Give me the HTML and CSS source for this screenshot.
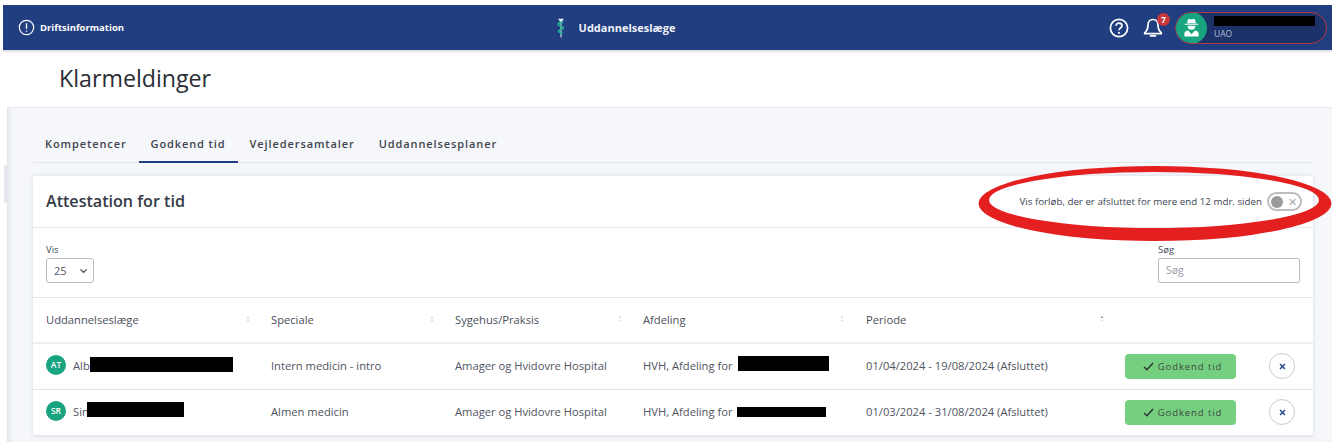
FILE: index.html
```html
<!DOCTYPE html>
<html lang="da">
<head>
<meta charset="utf-8">
<title>Klarmeldinger</title>
<link rel="stylesheet" href="styles.css">
</head>
<body>
<div class="app">
  <header class="topbar">
    <div class="top-left">
      <svg class="ico-info" viewBox="0 0 18 18"><circle cx="9" cy="9" r="7.6" fill="none" stroke="#fff" stroke-width="1.3"/><path d="M9 4.6v5.6M9 12.2v1.4" stroke="#fff" stroke-width="1.5"/></svg>
      <span>Driftsinformation</span>
    </div>
    <div class="top-center">
      <svg class="logo" viewBox="0 0 12 24"><path d="M2.500 .8h7L6.600 5v18.500H5.400V5z" fill="#e8edf6"/><path d="M8.800 5.200C5.500 4.800 2.600 5.600 2.600 7.800s6.200 1.600 6.200 4-5.800 1.600-5.800 3.800 4 1.600 4.600 3" fill="none" stroke="#1fb590" stroke-width="2"/></svg>
      <span>Uddannelseslæge</span>
    </div>
    <div class="top-right">
      <svg class="ico-help" viewBox="0 0 20 20"><circle cx="10" cy="10" r="8.600" fill="none" stroke="#fff" stroke-width="1.700"/><path d="M7 7.800C7 6 8.400 5.200 10 5.200s3 1 3 2.500c0 2.300-3 2.200-3 4.500" fill="none" stroke="#fff" stroke-width="1.700"/><circle cx="10" cy="14.800" r="1.100" fill="#fff"/></svg>
      <div class="bell">
        <svg viewBox="0 0 20 22"><path d="M10 2.500c-3.300 0-5 2.600-5 5.500 0 4-1.200 6-3.300 7.800v.9h16.600v-.9C16.200 14 15 12 15 8c0-2.900-1.700-5.500-5-5.500z" fill="none" stroke="#fff" stroke-width="1.700"/><path d="M7.500 18.800h5" stroke="#fff" stroke-width="1.800" stroke-linecap="round"/></svg>
        <span class="badge">7</span>
      </div>
      <div class="user">
        <span class="user-avatar">
          <svg viewBox="0 0 20 20"><path d="M6 2.500 7 .8l3 .7 3-.7 1 1.700 .8 3H5.200z" fill="#fff"/><path d="M2.800 6h14.400v1.100H2.800z" fill="#fff"/><path d="M5.800 8.200h8.400c0 2.800-1.800 4.200-4.200 4.200S5.800 11 5.800 8.200z" fill="#fff"/><path d="M2.500 19.500v-2.800c0-2 1.800-3.500 4-3.500l3.500 3.800 3.500-3.800c2.200 0 4 1.500 4 3.500v2.800z" fill="#fff"/></svg>
        </span>
        <span class="user-text">
          <span class="redact user-name"></span>
          <span class="user-role">UAO</span>
        </span>
      </div>
    </div>
  </header>

  <main class="main">
    <span class="side-tab"></span>
    <div class="titlebar"><h1>Klarmeldinger</h1></div>
    <div class="content">
      <nav class="tabs">
        <a class="tab">Kompetencer</a>
        <a class="tab tab-active">Godkend tid</a>
        <a class="tab">Vejledersamtaler</a>
        <a class="tab">Uddannelsesplaner</a>
      </nav>
      <section class="card">
        <div class="card-head">
          <h2>Attestation for tid</h2>
          <div class="toggle-wrap">
            <span>Vis forløb, der er afsluttet for mere end 12 mdr. siden</span>
            <span class="toggle"><i class="knob"></i><i class="toggle-x">✕</i></span>
          </div>
        </div>
        <div class="filters">
          <div class="field">
            <label>Vis</label>
            <div class="select"><span>25</span><svg viewBox="0 0 10 6"><path d="M1.500 1.200 5 4.500l3.500-3.300" fill="none" stroke="#555" stroke-width="1.500"/></svg></div>
          </div>
          <div class="field">
            <label>Søg</label>
            <div class="search">Søg</div>
          </div>
        </div>
        <table class="grid">
          <colgroup><col class="c1"><col class="c2"><col class="c3"><col class="c4"><col class="c5"><col class="c6"></colgroup>
          <thead>
            <tr>
              <th><div class="th">Uddannelseslæge<span class="sort"><i>▲</i><i>▼</i></span></div></th>
              <th><div class="th">Speciale<span class="sort"><i>▲</i><i>▼</i></span></div></th>
              <th><div class="th">Sygehus/Praksis<span class="sort"><i>▲</i><i>▼</i></span></div></th>
              <th><div class="th">Afdeling<span class="sort"><i>▲</i><i>▼</i></span></div></th>
              <th><div class="th">Periode<span class="sort"><i class="on">▲</i><i>▼</i></span></div></th>
              <th></th>
            </tr>
          </thead>
          <tbody>
            <tr>
              <td><div class="person"><span class="avatar">AT</span><span>Alb</span><span class="redact r-name1"></span></div></td>
              <td>Intern medicin - intro</td>
              <td>Amager og Hvidovre Hospital</td>
              <td><div class="dept"><span>HVH, Afdeling for</span><span class="redact r-dept1"></span></div></td>
              <td>01/04/2024 - 19/08/2024 (Afsluttet)</td>
              <td><div class="actions"><button class="approve"><svg viewBox="0 0 12 10"><path d="M1 5.500 4.300 8.600 11 1.200" fill="none" stroke="#333" stroke-width="1.700"/></svg>Godkend tid</button><button class="reject"><svg viewBox="0 0 8 8"><path d="M1.200 1.200l5.600 5.600M6.800 1.200 1.200 6.800" stroke="#2d4a8a" stroke-width="1.800"/></svg></button></div></td>
            </tr>
            <tr>
              <td><div class="person"><span class="avatar">SR</span><span>Sin</span><span class="redact r-name2"></span></div></td>
              <td>Almen medicin</td>
              <td>Amager og Hvidovre Hospital</td>
              <td><div class="dept"><span>HVH, Afdeling for</span><span class="redact r-dept2"></span></div></td>
              <td>01/03/2024 - 31/08/2024 (Afsluttet)</td>
              <td><div class="actions"><button class="approve"><svg viewBox="0 0 12 10"><path d="M1 5.500 4.300 8.600 11 1.200" fill="none" stroke="#333" stroke-width="1.700"/></svg>Godkend tid</button><button class="reject"><svg viewBox="0 0 8 8"><path d="M1.200 1.200l5.600 5.600M6.800 1.200 1.200 6.800" stroke="#2d4a8a" stroke-width="1.800"/></svg></button></div></td>
            </tr>
          </tbody>
        </table>
      </section>
    </div>
  </main>

  <svg class="annotation" viewBox="0 0 360 84"><path fill="#e41f1f" fill-rule="evenodd" d="M2.500 41.500a176.500 37.500 0 1 0 353 0a176.500 37.500 0 1 0 -353 0zM13 38a165 28 0 1 1 330 0a165 28 0 1 1 -330 0z"/></svg>
</div>
</body>
</html>
```
FILE: styles.css
```css
* { box-sizing: border-box; }
html, body { margin: 0; height: 100%; background: #fff; overflow: hidden; }
body { font-family: "Open Sans", "Liberation Sans", sans-serif; color: #3c4250; }

.app { position: relative; height: 437px; margin: 5px 7px 0 3px; overflow: hidden; }

.topbar {
  height: 45px; background: #213e80; display: grid;
  grid-template-columns: 1fr auto 1fr; align-items: center; color: #fff;
  position: relative; z-index: 1; box-shadow: 0 1px 3px rgba(30,40,70,.25);
}
.top-left { display: flex; align-items: center; gap: 5px; padding-left: 15px; font-size: 9.500px; font-weight: 700; }
.ico-info { width: 17px; height: 17px; }
.top-center { display: flex; align-items: center; gap: 13px; font-size: 11px; font-weight: 700; color: #eef1f8; padding-right: 104px; }
.logo { width: 10px; height: 24px; }
.top-right { display: flex; align-items: center; justify-content: flex-end; padding-right: 5px; }
.ico-help { width: 20px; height: 20px; margin-right: 14px; }
.bell { position: relative; width: 20px; height: 22px; margin-right: 12px; }
.bell svg { width: 20px; height: 22px; display: block; }
.badge {
  position: absolute; top: -4px; right: -7px; width: 13px; height: 13px; border-radius: 50%;
  background: #c8373c; color: #fff; font-size: 8px; font-weight: 700; line-height: 13px; text-align: center;
}
.user {
  width: 152px; height: 32px; border: 1.500px solid #ad3a4a; border-radius: 16px; background: #1d3269;
  display: flex; align-items: center; overflow: hidden;
}
.user-avatar { width: 32px; height: 32px; flex: none; margin-left: -1px; border-radius: 50%; background: #17a47e; display: flex; align-items: center; justify-content: center; }
.user-avatar svg { width: 19px; height: 19px; }
.user-text { display: flex; flex-direction: column; padding-left: 7px; }
.user-name { width: 101px; height: 10px; }
.user-role { font-size: 8.500px; color: #b4bdd2; line-height: 11px; margin-top: 2px; }
.redact { display: inline-block; background: #000; }

.main { position: relative; margin-left: 4px; height: 392px; background: #f5f7fb; box-shadow: inset 4px 0 4px -2px rgba(60,70,100,.12); }
.side-tab { position: absolute; left: -3px; top: 115px; width: 3px; height: 38px; background: #e6e8ee; }
.titlebar { height: 58px; background: #fff; border-bottom: 1px solid #e6e8ef; padding: 13px 0 0 52px; }
h1 { margin: 0; font-size: 23.200px; font-weight: 500; line-height: 30px; color: #2a2d34; }
.content { padding: 18px 19px 0 26px; }

.tabs { display: flex; height: 37px; border-bottom: 1px solid #e4e6ed; }
.tab { height: 37px; padding: 9px 12px 0; font-size: 11px; font-weight: 600; letter-spacing: .9px; color: #3f4450; line-height: 18px; }
.tab-active { border-bottom: 2px solid #233f83; }

.card { margin-top: 13px; background: #fff; box-shadow: 0 0 4px rgba(60,70,100,.18); }
.card-head { height: 52px; display: flex; align-items: center; justify-content: space-between; padding: 0 11px 0 13px; border-bottom: 1px solid #e8e9ee; }
h2 { margin: 0 0 2px; font-size: 16.100px; font-weight: 600; color: #343a46; }
.toggle-wrap { display: flex; align-items: center; gap: 5px; font-size: 9.760px; color: #3c4250; position: relative; z-index: 3; }
.toggle { width: 35px; height: 19px; border: 2.500px solid #bdbdbd; border-radius: 10px; display: flex; align-items: center; justify-content: space-between; padding: 0 3px 0 2px; }
.knob { width: 12px; height: 12px; border-radius: 50%; background: #9a9a9a; }
.toggle-x { font-size: 11px; font-style: normal; color: #aaa; line-height: 1; }

.filters { height: 70px; display: flex; justify-content: space-between; padding: 16px 13px 0; border-bottom: 1px solid #e3e4ea; }
.field label { display: block; font-size: 9.500px; line-height: 12px; color: #444a56; }
.select { margin-top: 2px; width: 48px; height: 25px; border: 1px solid #b9bcc4; border-radius: 3px; display: flex; align-items: center; justify-content: space-between; padding: 0 5px 0 7px; font-size: 11px; color: #555a66; }
.select svg { width: 9px; height: 6px; }
.search { margin-top: 2px; width: 142px; height: 25px; border: 1px solid #b9bcc4; border-radius: 2px; padding: 0 7px; line-height: 23px; font-size: 10.500px; color: #9a9da6; }

.grid { width: 100%; table-layout: fixed; border-collapse: collapse; font-size: 11.200px; color: #4f5461; }
.c1 { width: 225px; } .c2 { width: 184px; } .c3 { width: 188px; } .c4 { width: 222px; } .c5 { width: 260px; } .c6 { width: 201px; }
th { height: 45px; font-weight: 500; font-size: 11.200px; text-align: left; padding: 0 8px 2px 13px; border-bottom: 2px solid #eff0f3; color: #4a4f5c; }
.th { display: flex; justify-content: space-between; align-items: center; }
.sort { display: flex; flex-direction: column; font-size: 4px; line-height: 4.500px; color: #d5d7dc; }
.sort i { font-style: normal; }
.sort .on { color: #8b8f98; }
td { height: 46px; padding: 0 0 2px 13px; border-bottom: 1px solid #e3e4ea; }
th:nth-child(5), td:nth-child(5) { padding-left: 14px; }
.person { display: flex; align-items: center; }
.avatar { width: 20px; height: 20px; border-radius: 50%; background: #17a47e; color: #fff; font-size: 8.500px; font-weight: 600; text-align: center; line-height: 20px; margin-right: 7px; }
.r-name1 { width: 143px; height: 15px; margin-top: -2px; }
.r-name2 { width: 97px; height: 15px; margin-top: -4px; margin-left: -2px; }
.dept { display: flex; align-items: center; white-space: nowrap; gap: 3px; }
.r-dept1 { width: 91px; height: 15px; margin: -4px 0 0 2px; }
.r-dept2 { width: 89px; height: 10px; margin: 1px 0 0 1px; }
.actions { display: flex; align-items: center; justify-content: space-between; padding-right: 18px; margin-bottom: -2px; }
.approve { width: 111px; height: 25px; border: 0; border-radius: 4px; background: #75cf80; color: #3d4a40; font-family: inherit; font-size: 9.500px; font-weight: 500; letter-spacing: .9px; display: flex; align-items: center; justify-content: center; gap: 4px; padding: 0 0 0 4px; }
.approve svg { width: 11px; height: 9px; }
.reject { width: 26px; height: 26px; border: 1px solid #c9cbd0; border-radius: 50%; background: #fff; padding: 0; display: flex; align-items: center; justify-content: center; }
.reject svg { width: 7px; height: 7px; }

.annotation { position: absolute; left: 973px; top: 157px; width: 360px; height: 84px; z-index: 2; pointer-events: none; overflow: visible; }
```
